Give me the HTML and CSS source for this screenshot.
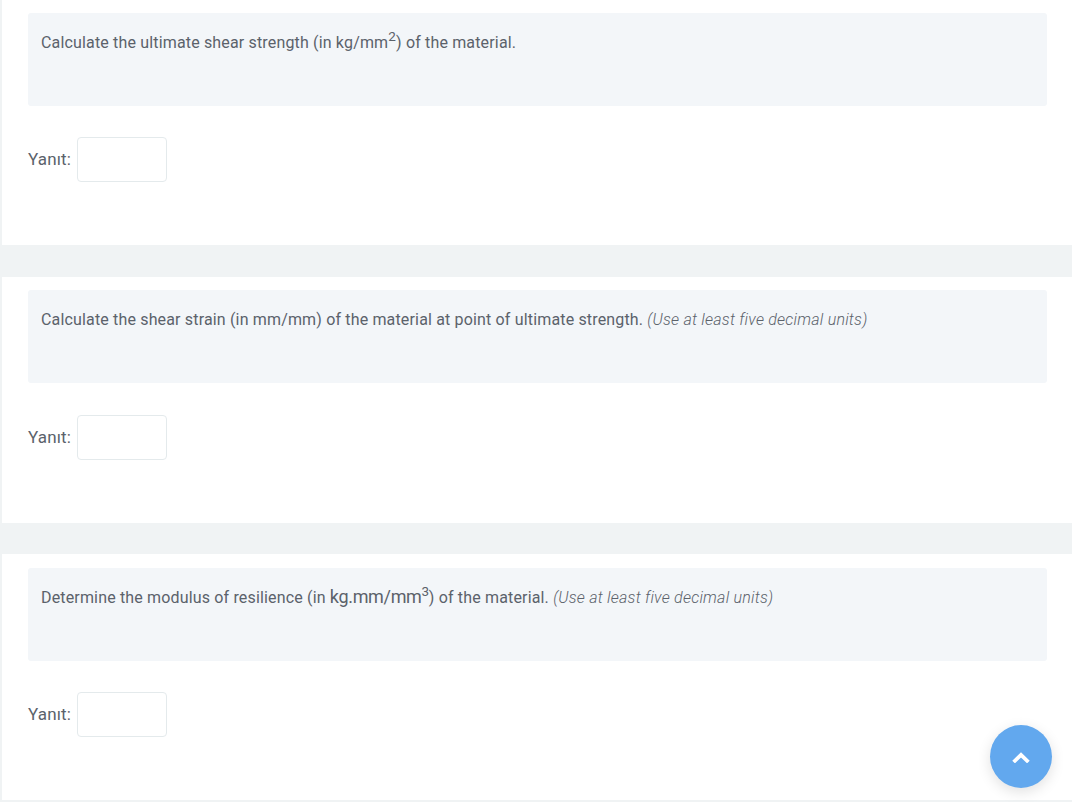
FILE: index.html
```html
<!DOCTYPE html>
<html lang="tr">
<head>
<meta charset="utf-8">
<title>Sorular</title>
<link rel="stylesheet" href="styles.css">
</head>
<body>
<main class="page">
  <section class="card">
    <div class="question"><p>Calculate the ultimate shear strength (in kg/mm<sup>2</sup>) of the material.</p></div>
    <div class="answer"><label class="answer-label">Yanıt:</label><input class="answer-input" type="text"></div>
  </section>
  <section class="card">
    <div class="question"><p>Calculate the shear strain (in mm/mm) of the material at point of ultimate strength. <em>(Use at least five decimal units)</em></p></div>
    <div class="answer"><label class="answer-label">Yanıt:</label><input class="answer-input" type="text"></div>
  </section>
  <section class="card">
    <div class="question"><p>Determine the modulus of resilience (in <span class="unit">kg.mm/mm<sup>3</sup></span>) of the material. <em>(Use at least five decimal units)</em></p></div>
    <div class="answer"><label class="answer-label">Yanıt:</label><input class="answer-input" type="text"></div>
  </section>
</main>
<a class="to-top" href="#" aria-label="Yukarı">
  <svg class="to-top-icon" viewBox="0 -1 18 12" width="18" height="12"><path d="M1.6 10 L9 2.8 L16.4 10" fill="none" stroke="#fff" stroke-width="3.8" stroke-linejoin="miter"/></svg>
</a>
</body>
</html>
```
FILE: styles.css
```css
* { box-sizing: border-box; }
html, body { margin: 0; height: 100%; overflow: hidden; }
body {
  background: #f0f3f4;
  font-family: Roboto, "Liberation Sans", sans-serif;
  color: #5b626b;
}
.page {
  display: flex;
  flex-direction: column;
  gap: 31.5px;
  margin-top: -0.6px;
  padding-left: 2px;
}
.card {
  background: #fff;
  height: 246px;
  padding: 13.5px 25px 0 26px;
}
.question {
  height: 93px;
  background: #f3f6f9;
  border-radius: 3px;
  padding: 17.8px 13px;
}
.question p {
  margin: 0;
  font-size: 16px;
  line-height: 24px;
  letter-spacing: 0.16px;
}
.question sup { font-size: 13.5px; line-height: 0; position: relative; top: -7px; vertical-align: baseline; }
.unit { font-size: 18px; letter-spacing: -0.33px; line-height: 0; }
.question em { font-weight: 300; letter-spacing: 0.23px; }
.answer {
  display: flex;
  align-items: center;
  gap: 6px;
  margin-top: 31.5px;
}
.answer-label { font-size: 17px; letter-spacing: 0.15px; padding-bottom: 1.6px; }
.answer-input {
  width: 90px;
  height: 45px;
  background: #fff;
  border: 1px solid #e4eaec;
  border-radius: 4px;
}
.to-top {
  position: fixed;
  right: 20px;
  bottom: 14px;
  width: 62px;
  height: 63px;
  border-radius: 50%;
  background: #62a8ee;
  box-shadow: 0 4px 14px rgba(0,0,0,.12);
  display: flex;
  align-items: center;
  justify-content: center;
}
.to-top-icon { display: block; }
```
